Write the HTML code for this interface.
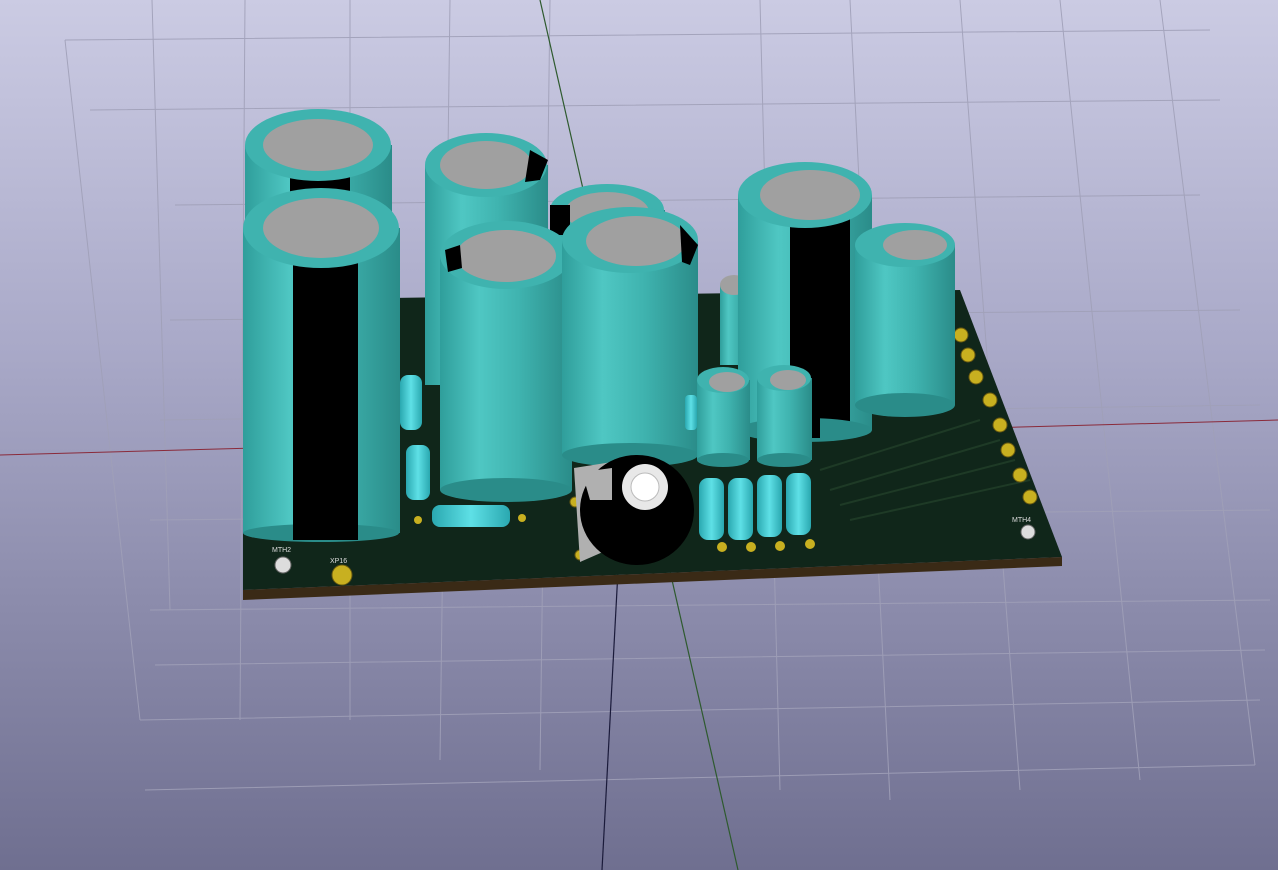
<!DOCTYPE html>
<html><head><meta charset="utf-8"><style>
html,body{margin:0;padding:0;width:1278px;height:870px;overflow:hidden}
body{background:linear-gradient(#cbcbe3 0%,#a9a9c8 40%,#8b8bab 70%,#6f6f90 100%)}
svg{position:absolute;left:0;top:0}
text{font-family:"Liberation Sans",sans-serif}
</style></head><body>
<svg width="1278" height="870" viewBox="0 0 1278 870">
<defs>
<linearGradient id="cy" x1="0" x2="1" y1="0" y2="0">
<stop offset="0" stop-color="#2f9e9b"/><stop offset="0.3" stop-color="#4fc7c3"/><stop offset="0.6" stop-color="#3fb3af"/><stop offset="1" stop-color="#2a8c89"/></linearGradient>
<linearGradient id="rs" x1="0" x2="1"><stop offset="0" stop-color="#2aa8b0"/><stop offset="0.5" stop-color="#5ee0e6"/><stop offset="1" stop-color="#2aa8b0"/></linearGradient>
</defs>
<g stroke="#a0a0b8" stroke-width="1" fill="none" opacity="0.9">
<path d="M65,40 L1210,30 M90,110 L1220,100 M175,205 L1200,195 M170,320 L1240,310 M160,420 L1260,405 M150,520 L1270,510 M150,610 L1270,600 M155,665 L1265,650 M140,720 L1260,700 M145,790 L1255,765"/>
<path d="M65,40 L140,720 M152,0 L170,610 M245,0 L240,720 M350,0 L350,720 M450,0 L440,760 M550,0 L540,770 M760,0 L780,790 M850,0 L890,800 M960,0 L1020,790 M1060,0 L1140,780 M1160,0 L1255,765"/>
</g>
<path d="M540,0 L738,870" stroke="#2e5a2e" stroke-width="1.2"/>
<path d="M625,440 L602,870" stroke="#1a1a3a" stroke-width="1.2"/>
<path d="M0,455 L1278,420" stroke="#8a2a3a" stroke-width="1"/>
<!-- board -->
<polygon points="243,300 960,290 1062,557 243,590" fill="#10261a"/>
<polygon points="243,590 1062,557 1062,566 243,600" fill="#3a2a16"/>
<g stroke="#1e3a26" stroke-width="2" fill="none">
<path d="M820,470 L980,420 M830,490 L1000,440 M840,505 L1015,460 M850,520 L1030,480"/>
</g>
<!-- pads -->
<g fill="#c8b020" stroke="#6a5a10">
<circle cx="342" cy="575" r="10"/><circle cx="961" cy="335" r="7"/><circle cx="968" cy="355" r="7"/><circle cx="976" cy="377" r="7"/><circle cx="990" cy="400" r="7"/><circle cx="1000" cy="425" r="7"/><circle cx="1008" cy="450" r="7"/><circle cx="1020" cy="475" r="7"/><circle cx="1030" cy="497" r="7"/><circle cx="580" cy="555" r="5"/><circle cx="575" cy="502" r="5"/>
</g>
<circle cx="283" cy="565" r="8" fill="#ddd" stroke="#666"/><circle cx="1028" cy="532" r="7" fill="#ddd" stroke="#666"/>
<g fill="#ddd" font-size="7"><text x="272" y="552">MTH2</text><text x="330" y="563">XP16</text><text x="1012" y="522">MTH4</text></g>
<rect x="855" y="240" width="25" height="110" fill="#e0e0e0"/>
<!-- capacitors back -->
<g>
<rect x="245" y="145" width="147" height="190" fill="url(#cy)"/><rect x="290" y="170" width="60" height="30" fill="#000"/>
<ellipse cx="318" cy="145" rx="73" ry="36" fill="#3fb3af"/><ellipse cx="318" cy="145" rx="55" ry="26" fill="#a0a0a0"/>
<rect x="425" y="165" width="123" height="220" fill="url(#cy)"/>
<ellipse cx="486" cy="165" rx="61" ry="32" fill="#3fb3af"/><ellipse cx="486" cy="165" rx="46" ry="24" fill="#a0a0a0"/><path d="M530,150 L548,160 L540,180 L525,182Z" fill="#000"/>
<rect x="550" y="210" width="115" height="200" fill="url(#cy)"/>
<ellipse cx="607" cy="210" rx="57" ry="26" fill="#3fb3af"/><ellipse cx="607" cy="212" rx="42" ry="20" fill="#a0a0a0"/><rect x="550" y="205" width="20" height="30" fill="#000"/>
<rect x="720" y="285" width="28" height="80" fill="url(#cy)"/><ellipse cx="734" cy="285" rx="14" ry="10" fill="#a0a0a0"/>
<rect x="738" y="195" width="134" height="235" fill="url(#cy)"/><rect x="790" y="210" width="60" height="220" fill="#000"/>
<ellipse cx="805" cy="430" rx="67" ry="12" fill="#2a8c89"/><rect x="790" y="400" width="30" height="38" fill="#000"/>
<ellipse cx="805" cy="195" rx="67" ry="33" fill="#3fb3af"/><ellipse cx="810" cy="195" rx="50" ry="25" fill="#a0a0a0"/>
<rect x="855" y="245" width="100" height="160" fill="url(#cy)"/><ellipse cx="905" cy="405" rx="50" ry="12" fill="#2a8c89"/>
<ellipse cx="905" cy="245" rx="50" ry="22" fill="#3fb3af"/><ellipse cx="915" cy="245" rx="32" ry="15" fill="#a0a0a0"/>
<!-- front caps -->
<rect x="243" y="228" width="157" height="305" fill="url(#cy)"/><ellipse cx="321" cy="533" rx="78" ry="9" fill="#2a8c89"/>
<rect x="293" y="250" width="65" height="290" fill="#000"/>
<ellipse cx="321" cy="228" rx="78" ry="40" fill="#3fb3af"/><ellipse cx="321" cy="228" rx="58" ry="30" fill="#a0a0a0"/>
<rect x="440" y="255" width="132" height="235" fill="url(#cy)"/><ellipse cx="506" cy="490" rx="66" ry="12" fill="#2a8c89"/>
<ellipse cx="506" cy="255" rx="66" ry="34" fill="#3fb3af"/><ellipse cx="506" cy="256" rx="50" ry="26" fill="#a0a0a0"/><path d="M445,250 L460,245 L462,268 L448,272Z" fill="#000"/>
<rect x="562" y="240" width="136" height="215" fill="url(#cy)"/><ellipse cx="630" cy="455" rx="68" ry="12" fill="#2a8c89"/>
<ellipse cx="630" cy="240" rx="68" ry="33" fill="#3fb3af"/><ellipse cx="636" cy="241" rx="50" ry="25" fill="#a0a0a0"/><path d="M680,225 L698,245 L690,265 L682,262Z" fill="#000"/>
<rect x="697" y="380" width="53" height="80" fill="url(#cy)"/><ellipse cx="723" cy="460" rx="26" ry="7" fill="#2a8c89"/>
<ellipse cx="723" cy="380" rx="26" ry="13" fill="#3fb3af"/><ellipse cx="727" cy="382" rx="18" ry="10" fill="#a0a0a0"/>
<rect x="757" y="378" width="55" height="82" fill="url(#cy)"/><ellipse cx="784" cy="460" rx="27" ry="7" fill="#2a8c89"/>
<ellipse cx="784" cy="378" rx="27" ry="13" fill="#3fb3af"/><ellipse cx="788" cy="380" rx="18" ry="10" fill="#a0a0a0"/>
</g>
<!-- resistors -->
<g fill="url(#rs)">
<rect x="400" y="375" width="22" height="55" rx="8"/><rect x="406" y="445" width="24" height="55" rx="8"/>
<rect x="432" y="505" width="78" height="22" rx="8"/>
<rect x="699" y="478" width="25" height="62" rx="9"/><rect x="728" y="478" width="25" height="62" rx="9"/><rect x="757" y="475" width="25" height="62" rx="9"/><rect x="786" y="473" width="25" height="62" rx="9"/>
<rect x="685" y="395" width="12" height="35" rx="4"/>
</g>
<g fill="#c8b020"><circle cx="722" cy="547" r="5"/><circle cx="751" cy="547" r="5"/><circle cx="780" cy="546" r="5"/><circle cx="810" cy="544" r="5"/><circle cx="418" cy="520" r="4"/><circle cx="522" cy="518" r="4"/></g>
<!-- trimmer -->
<polygon points="574,468 612,462 612,548 580,562" fill="#b0b0b0"/>
<ellipse cx="637" cy="510" rx="57" ry="55" fill="#000"/>
<circle cx="645" cy="487" r="23" fill="#e8e8e8"/><circle cx="645" cy="487" r="14" fill="#ffffff" stroke="#bbb"/>
<polygon points="582,472 612,468 612,500 590,500" fill="#b0b0b0"/>
</svg>
</body></html>
